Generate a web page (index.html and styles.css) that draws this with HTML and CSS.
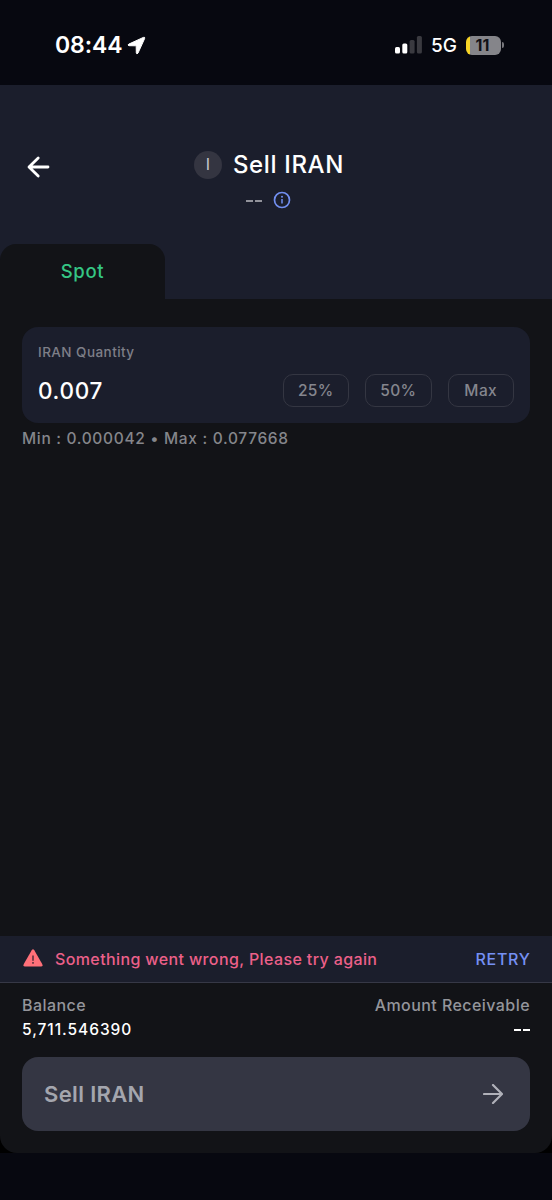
FILE: index.html
```html
<!DOCTYPE html>
<html lang="en">
<head>
<meta charset="utf-8">
<title>Sell IRAN</title>
<link rel="stylesheet" href="styles.css">
</head>
<body>
<div class="screen">
  <div class="status">
    <div class="status-left">
      <span class="clock">08:44</span>
      <svg class="location" width="19" height="19" viewBox="0 0 19 19"><path d="M1.8 8.1 16.4 1.4Q18.2.8 17.6 2.6L11 17.1Q9.7 18.8 9.3 16.8L9.2 10.3Q9.2 9.8 8.7 9.8L2 9.7Q0 9.1 1.8 8.1Z" fill="#fff" stroke="#fff" stroke-width="1"/></svg>
    </div>
    <div class="status-right">
      <svg width="28" height="18" viewBox="0 0 28 18"><g fill="#fff"><rect x="0" y="11" width="5" height="6.5" rx="1.5"/><rect x="7.3" y="7.5" width="5" height="10" rx="1.5"/></g><g fill="#3a3a40"><rect x="14.6" y="4" width="5" height="13.5" rx="1.5"/><rect x="21.9" y="0" width="5" height="17.5" rx="1.5"/></g></svg>
      <span class="network">5G</span>
      <span class="battery"><span class="battery-body">11</span><span class="battery-tip"></span></span>
    </div>
  </div>

  <header class="header">
    <svg class="back" width="24" height="24" viewBox="0 0 24 24"><path d="M12.2 3 3 12l9.2 9M3.2 12H22" fill="none" stroke="#fff" stroke-width="2.8" stroke-linecap="round" stroke-linejoin="round"/></svg>
    <div class="heading">
      <div class="title-row"><span class="coin">I</span><h1 class="title">Sell IRAN</h1></div>
      <div class="price-row"><span class="dashes"><i></i><i></i></span>
        <svg width="18" height="18" viewBox="0 0 18 18"><circle cx="9" cy="9" r="7.5" fill="none" stroke="#728ff0" stroke-width="1.7"/><circle cx="9" cy="5.8" r="1" fill="#728ff0"/><path d="M9 8v4.6" stroke="#728ff0" stroke-width="1.5"/></svg>
      </div>
    </div>
    <div class="tab"><span class="tab-label">Spot</span></div>
  </header>

  <main class="main">
    <section class="card">
      <div class="card-label">IRAN Quantity</div>
      <div class="card-row">
        <span class="amount">0.007</span>
        <div class="chips"><span class="chip">25%</span><span class="chip">50%</span><span class="chip">Max</span></div>
      </div>
    </section>
    <p class="limits">Min : 0.000042 • Max : 0.077668</p>
  </main>

  <div class="alert">
    <svg class="warning" width="20" height="18" viewBox="0 0 20 18"><path d="M8.7 1.2Q10 -.8 11.3 1.2L19.2 15Q20.2 17.3 18 17.5H2Q-.2 17.3.8 15Z" fill="#ff7079"/><path d="M10 6.5v5.3M10 13v1.8" stroke="#5c303d" stroke-width="1.6"/></svg>
    <span class="alert-text">Something went wrong, Please try again</span>
    <span class="retry">RETRY</span>
  </div>

  <div class="corner">
    <footer class="footer">
      <div class="row labels"><span class="balance-label">Balance</span><span class="receive-label">Amount Receivable</span></div>
      <div class="row values"><span class="balance">5,711.546390</span><span class="dashes bright"><i></i><i></i></span></div>
      <div class="sell"><span class="sell-label">Sell IRAN</span>
        <svg width="20" height="20" viewBox="0 0 20 20"><path d="M10 1l9 9-9 9M1 10h17.5" fill="none" stroke="#b0b1b9" stroke-width="2.2" stroke-linecap="round" stroke-linejoin="round"/></svg>
      </div>
    </footer>
  </div>
</div>
</body>
</html>
```

FILE: styles.css
```css
* { box-sizing: border-box; }
body { margin: 0; background: #070810; font-family: Inter, "Liberation Sans", sans-serif; font-weight: 500; }
.screen { width: 552px; height: 1200px; display: flex; flex-direction: column; overflow: hidden; white-space: nowrap; }
.status { height: 85px; flex: none; display: flex; justify-content: space-between; padding: 31px 48px 0 55px; color: #fff; }
.status-left, .status-right { display: flex; align-items: center; height: 28px; }
.clock { font-size: 23px; font-weight: 600; letter-spacing: -0.1px; }
.location { margin-left: 5px; }
.network { font-size: 19px; margin-left: 8px; }
.battery { display: flex; align-items: center; margin-left: 9px; }
.battery-body { width: 35px; height: 19px; border-radius: 6px; background: linear-gradient(90deg, #f7d426 4px, #85858a 4px); color: #111116; font-size: 16px; font-weight: 700; line-height: 19px; text-align: center; padding-right: 2px; }
.battery-tip { width: 2px; height: 6px; margin-left: 1px; border-radius: 0 3px 3px 0; background: #77777c; }

.header { height: 214px; flex: none; background: #1b1e2c; display: grid; grid-template-columns: 26px 1fr 26px; grid-template-rows: 159px 55px; }
.back { grid-column: 2; grid-row: 1; margin-top: 70px; }
.heading { grid-column: 1 / 4; grid-row: 1; padding-top: 65px; padding-right: 14px; display: flex; flex-direction: column; align-items: center; }
.title-row { display: flex; align-items: center; height: 30px; gap: 11px; }
.coin { width: 28px; height: 28px; border-radius: 50%; background: #343541; color: #c5c6cc; font-size: 16px; font-weight: 400; line-height: 27px; text-align: center; }
.title { margin: -2px 0 0; font-size: 24px; font-weight: 550; letter-spacing: 0.65px; color: #fff; }
.price-row { display: flex; align-items: center; gap: 11px; margin: 11px 2px 0 0; height: 18px; }
.dashes { display: flex; gap: 2px; padding-top: 1px; }
.dashes i { width: 7px; height: 2px; background: #92939b; }
.tab { grid-column: 1 / 4; grid-row: 2; width: 165px; background: #121317; border-radius: 16px 16px 0 0; text-align: center; line-height: 54px; }
.tab-label { color: #35c684; font-size: 18.5px; letter-spacing: 0.65px; }

.main { flex: 1; background: #121317; padding: 28px 22px 0; }
.card { height: 96px; border-radius: 16px; background: #1b1e2c; padding: 17px 16px 0; }
.card-label { height: 17px; line-height: 17px; font-size: 13.5px; letter-spacing: 0.45px; color: #7e7f88; }
.card-row { display: flex; justify-content: space-between; align-items: center; height: 33px; margin-top: 13px; }
.amount { font-size: 22.5px; font-weight: 450; letter-spacing: 0.7px; color: #fff; }
.chips { display: flex; gap: 16px; }
.chip { width: 66.5px; height: 33px; border: 1px solid #343642; border-radius: 10px; text-align: center; line-height: 31px; font-size: 15.5px; letter-spacing: 0.4px; color: #85868e; }
.limits { margin: 5px 0 0; line-height: 22px; font-size: 15.5px; letter-spacing: 0.68px; color: #85868b; }

.alert { height: 47px; flex: none; background: #1b1e2c; border-bottom: 1px solid #363846; display: flex; align-items: center; padding: 0 22px 0 23px; font-size: 16px; }
.warning { margin-top: -2px; }
.alert-text { margin-left: 12px; letter-spacing: 0.38px; color: #ec6089; }
.retry { margin-left: auto; margin-right: -0.6px; letter-spacing: 0.7px; color: #7590f3; }

.corner { height: 170px; flex: none; margin-bottom: 47px; background: #000; }
.footer { height: 170px; background: #121317; border-radius: 0 0 17px 17px; padding: 12px 22px 0; }
.row { display: flex; justify-content: space-between; align-items: center; }
.labels { height: 20px; font-size: 16px; letter-spacing: 0.44px; color: #94959b; }
.values { height: 24px; margin-top: 2px; font-size: 15.5px; letter-spacing: 0.95px; color: #fff; }
.bright i { background: #fff; height: 2px; }
.sell { height: 74px; margin-top: 16px; border-radius: 16px; background: #343643; display: flex; justify-content: space-between; align-items: center; padding: 0 27px 0 22px; }
.sell-label { font-size: 22px; font-weight: 600; letter-spacing: 0.35px; color: #a4a6ae; }
```
